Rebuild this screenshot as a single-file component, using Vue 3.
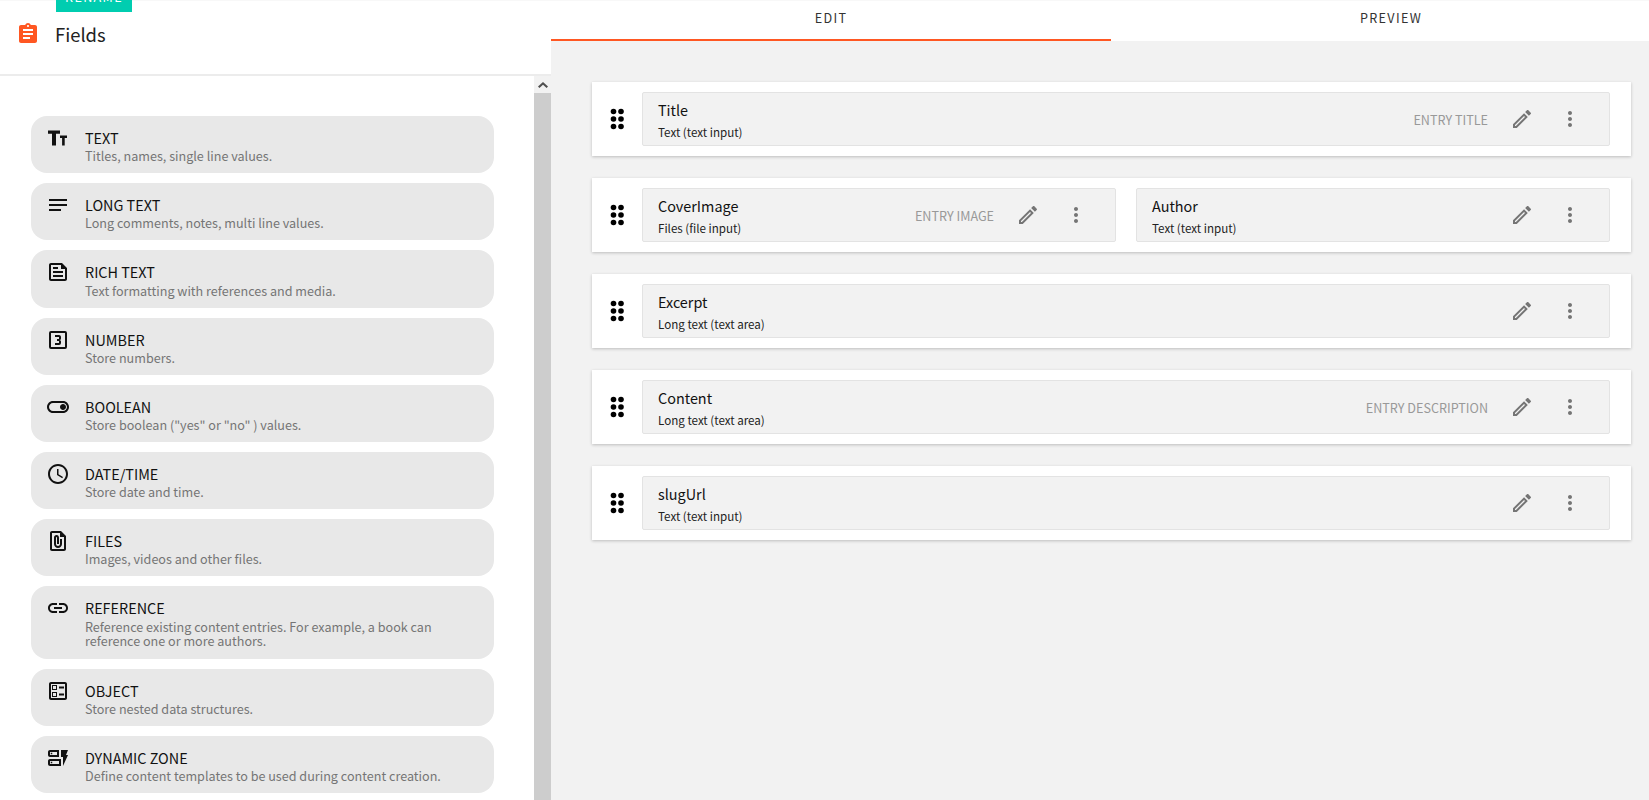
<script setup>
const I = {
  size: 'M2 4.5h12v3.2h-4V19.5H6V7.7H2zM14 9.5h7v2.6h-2.3v7.4h-2.6v-7.4H14z',
  notes: 'M3 18h12v-2H3v2zM3 6v2h18V6H3zm0 7h18v-2H3v2z',
  feed: 'M16 3H5C3.9 3 3 3.9 3 5v14c0 1.1.9 2 2 2h14c1.1 0 2-.9 2-2V8L16 3zM19 19H5V5h10v4h4V19zM7 17h10v-2H7V17zM12 7H7v2h5V7zM7 13h10v-2H7V13z',
  num: 'M15 15V13.5A1.5 1.5 0 0 0 13.5 12A1.5 1.5 0 0 0 15 10.5V9C15 7.89 14.1 7 13 7H9V9H13V11H11V13H13V15H9V17H13A2 2 0 0 0 15 15M19 19H5V5H19M19 3H5A2 2 0 0 0 3 5V19A2 2 0 0 0 5 21H19A2 2 0 0 0 21 19V5A2 2 0 0 0 19 3Z',
  toggle: 'M17 6H7c-3.31 0-6 2.69-6 6s2.69 6 6 6h10c3.31 0 6-2.69 6-6s-2.69-6-6-6zm0 10H7c-2.21 0-4-1.79-4-4s1.79-4 4-4h10c2.21 0 4 1.79 4 4s-1.79 4-4 4zm0-7c-1.66 0-3 1.34-3 3s1.34 3 3 3 3-1.34 3-3-1.34-3-3-3z',
  clock: 'M11.99 2C6.47 2 2 6.48 2 12s4.47 10 9.99 10C17.52 22 22 17.52 22 12S17.52 2 11.99 2zM12 20c-4.42 0-8-3.58-8-8s3.58-8 8-8 8 3.58 8 8-3.58 8-8 8zm.5-13H11v6l5.25 3.15.75-1.23-4.5-2.67z',
  file: 'M15 2H6c-1.1 0-2 .9-2 2v16c0 1.1.89 2 1.99 2H18c1.1 0 2-.9 2-2V7l-5-5zM6 20V4h8v4h4v12H6zm10-10v5c0 2.21-1.79 4-4 4s-4-1.79-4-4V8.5c0-1.47 1.26-2.64 2.76-2.49 1.3.13 2.24 1.32 2.24 2.63V15h-2V8.5c0-.28-.22-.5-.5-.5s-.5.22-.5.5V15c0 1.1.9 2 2 2s2-.9 2-2v-5h2z',
  link: 'M3.9 12c0-1.71 1.39-3.1 3.1-3.1h4V7H7c-2.76 0-5 2.24-5 5s2.24 5 5 5h4v-1.9H7c-1.71 0-3.1-1.39-3.1-3.1zM8 13h8v-2H8v2zm9-6h-4v1.9h4c1.71 0 3.1 1.39 3.1 3.1s-1.39 3.1-3.1 3.1h-4V17h4c2.76 0 5-2.24 5-5s-2.24-5-5-5z',
  ballot: 'M13 7.5h5v2h-5zm0 7h5v2h-5zM19 3H5c-1.1 0-2 .9-2 2v14c0 1.1.9 2 2 2h14c1.1 0 2-.9 2-2V5c0-1.1-.9-2-2-2zm0 16H5V5h14v14zM11 6H6v5h5V6zm-1 4H7V7h3v3zm1 3H6v5h5v-5zm-1 4H7v-3h3v3z',
  dyn: 'M13 11H4c-1.1 0-2-.9-2-2V6c0-1.1.9-2 2-2h9V11zM4 9h7V6H4V9zM15 20H4c-1.1 0-2-.9-2-2v-3c0-1.1.9-2 2-2h11V20zM4 18h9v-3H4V18zM22 9h-2l2-5h-7v7h2v9L22 9zM4.75 17.25h1.5v-1.5h-1.5V17.25zM4.75 8.25h1.5v-1.5h-1.5V8.25z'
}
const types = [
  { icon: I.size, name: 'TEXT', desc: 'Titles, names, single line values.' },
  { icon: I.notes, name: 'LONG TEXT', desc: 'Long comments, notes, multi line values.' },
  { icon: I.feed, name: 'RICH TEXT', desc: 'Text formatting with references and media.' },
  { icon: I.num, name: 'NUMBER', desc: 'Store numbers.' },
  { icon: I.toggle, name: 'BOOLEAN', desc: 'Store boolean ("yes" or "no" ) values.' },
  { icon: I.clock, name: 'DATE/TIME', desc: 'Store date and time.' },
  { icon: I.file, name: 'FILES', desc: 'Images, videos and other files.' },
  { icon: I.link, name: 'REFERENCE', desc: 'Reference existing content entries. For example, a book can reference one or more authors.', tall: true },
  { icon: I.ballot, name: 'OBJECT', desc: 'Store nested data structures.' },
  { icon: I.dyn, name: 'DYNAMIC ZONE', desc: 'Define content templates to be used during content creation.' }
]
const rows = [
  [{ name: 'Title', sub: 'Text (text input)', tag: 'ENTRY TITLE' }],
  [
    { name: 'CoverImage', sub: 'Files (file input)', tag: 'ENTRY IMAGE' },
    { name: 'Author', sub: 'Text (text input)' }
  ],
  [{ name: 'Excerpt', sub: 'Long text (text area)' }],
  [{ name: 'Content', sub: 'Long text (text area)', tag: 'ENTRY DESCRIPTION' }],
  [{ name: 'slugUrl', sub: 'Text (text input)' }]
]
const dots = [[4.5, 4.5], [12, 4.5], [4.5, 12], [12, 12], [4.5, 19.5], [12, 19.5]]
</script>

<template>
  <div class="page">
    <aside class="side">
      <header class="head">
        <span class="badge"><span class="badge-text">RENAME</span></span>
        <svg class="head-icon" viewBox="0 0 24 24" width="24" height="24">
          <path d="M19 3h-4.18C14.4 1.84 13.3 1 12 1c-1.3 0-2.4.84-2.82 2H5c-1.1 0-2 .9-2 2v14c0 1.1.9 2 2 2h14c1.1 0 2-.9 2-2V5c0-1.1-.9-2-2-2zm-7 0c.55 0 1 .45 1 1s-.45 1-1 1-1-.45-1-1 .45-1 1-1zm2 14H7v-2h7v2zm3-4H7v-2h10v2zm0-4H7V7h10v2z" />
        </svg>
        <span class="head-title">Fields</span>
      </header>
      <div class="side-body">
        <div class="list">
          <div v-for="t in types" :key="t.name" class="card" :class="{ tall: t.tall }">
            <svg class="card-icon" viewBox="0 0 24 24" width="24" height="24"><path :d="t.icon" /></svg>
            <div class="card-text">
              <div class="card-name">{{ t.name }}</div>
              <div class="card-desc">{{ t.desc }}</div>
            </div>
          </div>
        </div>
        <div class="scrollbar">
          <div class="scroll-btn">
            <svg viewBox="0 0 10 6" width="10" height="6"><path d="M5 0 10 4.6 8.6 6 5 2.7 1.4 6 0 4.6z" /></svg>
          </div>
          <div class="scroll-thumb"></div>
        </div>
      </div>
    </aside>
    <main class="main">
      <nav class="tabs">
        <div class="tab active">EDIT</div>
        <div class="tab">PREVIEW</div>
      </nav>
      <div class="rows">
        <section v-for="(r, i) in rows" :key="i" class="row">
          <div class="drag">
            <svg viewBox="0 0 17 24" width="17" height="24">
              <circle v-for="(d, j) in dots" :key="j" :cx="d[0]" :cy="d[1]" r="2.8" />
            </svg>
          </div>
          <div class="boxes">
            <div v-for="f in r" :key="f.name" class="box">
              <div class="box-text">
                <div class="box-name">{{ f.name }}</div>
                <div class="box-sub">{{ f.sub }}</div>
              </div>
              <span v-if="f.tag" class="box-tag">{{ f.tag }}</span>
              <svg class="act" viewBox="0 0 24 24" width="24" height="24">
                <path d="M3 17.25V21h3.75L17.81 9.94l-3.75-3.75L3 17.25zM5.92 19H5v-.92l9.06-9.06.92.92L5.92 19zM20.71 5.63l-2.34-2.34c-.2-.2-.45-.29-.71-.29s-.51.1-.7.29l-1.83 1.83 3.75 3.75 1.83-1.83c.39-.39.39-1.02 0-1.41z" />
              </svg>
              <svg class="act" viewBox="0 0 24 24" width="24" height="24">
                <path d="M12 8c1.1 0 2-.9 2-2s-.9-2-2-2-2 .9-2 2 .9 2 2 2zm0 2c-1.1 0-2 .9-2 2s.9 2 2 2 2-.9 2-2-.9-2-2-2zm0 6c-1.1 0-2 .9-2 2s.9 2 2 2 2-.9 2-2-.9-2-2-2z" />
              </svg>
            </div>
          </div>
        </section>
      </div>
    </main>
  </div>
</template>

<style scoped>
.page {
  display: flex;
  height: 800px;
  overflow: hidden;
  background: #fff;
  font-family: "Noto Sans CJK SC", "Open Sans", sans-serif;
  color: #111;
}
.side {
  width: 551px;
  flex: none;
  display: flex;
  flex-direction: column;
}
.head {
  position: relative;
  height: 76px;
  flex: none;
  box-sizing: border-box;
  border-top: 1px solid #f8f8f8;
  border-bottom: 2px solid #ececec;
  display: flex;
  align-items: flex-start;
  padding: 21px 0 0 16px;
  gap: 15px;
}
.badge {
  position: absolute;
  left: 56px;
  top: -1px;
  width: 76px;
  height: 12px;
  background: #00cdb0;
  color: #fff;
  font-size: 12.6px;
  line-height: 14px;
  letter-spacing: 1.35px;
  text-align: center;
  overflow: hidden;
}
.badge-text {
  display: block;
  margin-top: -10px;
}
.head-icon {
  fill: #ff5722;
  flex: none;
}
.head-title {
  font-size: 18.4px;
  line-height: 25px;
  color: #222;
}
.side-body {
  flex: 1;
  display: flex;
  min-height: 0;
}
.list {
  flex: 1;
  min-width: 0;
  box-sizing: border-box;
  padding: 40px 40px 0 31px;
  display: flex;
  flex-direction: column;
  gap: 10px;
  overflow: hidden;
}
.card {
  flex: none;
  display: flex;
  background: #e8e8e8;
  border-radius: 16px;
  padding: 10px 30px 10px 15px;
}
.card.tall {
  padding-bottom: 11px;
}
.card-icon {
  flex: none;
  margin-right: 15px;
  fill: #111;
}
.card-text {
  min-width: 0;
}
.card-name {
  font-size: 14.4px;
  line-height: 23.2px;
  color: #111;
}
.card-desc {
  font-size: 12.6px;
  line-height: 14px;
  color: #757575;
}
.scrollbar {
  width: 17px;
  flex: none;
  display: flex;
  flex-direction: column;
}
.scroll-btn {
  height: 17px;
  flex: none;
  background: #f2f2f2;
  display: flex;
  align-items: center;
  justify-content: center;
}
.scroll-btn svg {
  fill: #505050;
}
.scroll-thumb {
  flex: 1;
  background: #cdcdcd;
}
.main {
  flex: 1;
  min-width: 0;
  background: #f2f2f2;
}
.tabs {
  display: flex;
  background: #fff;
  height: 41px;
  overflow: hidden;
}
.tab {
  flex: none;
  width: 560px;
  box-sizing: border-box;
  height: 41px;
  border-top: 1px solid #f8f8f8;
  border-bottom: 2px solid transparent;
  text-align: center;
  font-size: 12.6px;
  line-height: 33px;
  letter-spacing: 1.35px;
  color: #333;
}
.tab.active {
  border-bottom-color: #ff5722;
}
.rows {
  padding: 41px 18px 0 41px;
  display: flex;
  flex-direction: column;
  gap: 22px;
}
.row {
  display: flex;
  height: 74px;
  box-sizing: border-box;
  background: #fff;
  box-shadow: 0 1px 3px rgba(0, 0, 0, 0.22);
  padding: 10px 21px 10px 0;
}
.drag {
  width: 50px;
  flex: none;
  display: flex;
  align-items: center;
  justify-content: center;
}
.drag svg {
  fill: #000;
}
.boxes {
  flex: 1;
  min-width: 0;
  display: flex;
  gap: 20px;
}
.box {
  flex: 1;
  min-width: 0;
  box-sizing: border-box;
  display: flex;
  align-items: center;
  background: #f2f2f2;
  border: 1px solid #e3e3e3;
  border-radius: 2px;
  padding: 0 27px 0 15px;
}
.box-text {
  flex: 1;
  min-width: 0;
}
.box-name {
  font-size: 14.4px;
  line-height: 24px;
  color: #111;
}
.box-sub {
  font-size: 11.6px;
  line-height: 18px;
  margin-top: 1px;
  color: #222;
}
.box-tag {
  font-size: 12.6px;
  color: #999;
  margin-right: 22px;
}
.act {
  flex: none;
  fill: #757575;
}
.act + .act {
  margin-left: 24px;
}
</style>

<style>
body {
  margin: 0;
  overflow: hidden;
}
</style>
